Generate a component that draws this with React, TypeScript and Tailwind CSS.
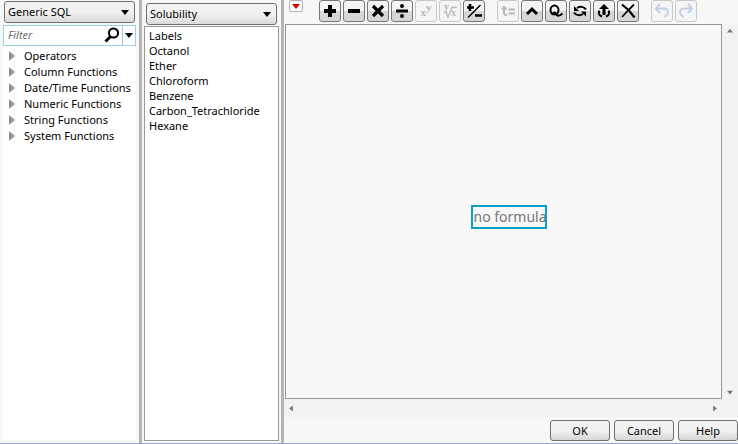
import { useState, type ReactNode } from "react";

const categories = [
  "Operators",
  "Column Functions",
  "Date/Time Functions",
  "Numeric Functions",
  "String Functions",
  "System Functions",
];

const columns = [
  "Labels",
  "Octanol",
  "Ether",
  "Chloroform",
  "Benzene",
  "Carbon_Tetrachloride",
  "Hexane",
];

interface Tool {
  label: string;
  icon: ReactNode;
  disabled?: boolean;
}

const Icon = ({ children }: { children: ReactNode }) => (
  <svg viewBox="0 0 20 20" className="size-5 shrink-0" fill="none" stroke="currentColor">
    {children}
  </svg>
);

const mathTools: Tool[] = [
  {
    label: "Add",
    icon: (
      <Icon>
        <path d="M10 4v12M4 10h12" strokeWidth="4" />
      </Icon>
    ),
  },
  {
    label: "Subtract",
    icon: (
      <Icon>
        <path d="M4 10h12" strokeWidth="4" />
      </Icon>
    ),
  },
  {
    label: "Multiply",
    icon: (
      <Icon>
        <path d="M5 5l10 10M15 5L5 15" strokeWidth="3.2" />
      </Icon>
    ),
  },
  {
    label: "Divide",
    icon: (
      <Icon>
        <path d="M4 10h12" strokeWidth="3" />
        <g fill="currentColor" stroke="none">
          <circle cx="10" cy="5" r="2" />
          <circle cx="10" cy="15" r="2" />
        </g>
      </Icon>
    ),
  },
  {
    label: "Power",
    disabled: true,
    icon: (
      <span className="flex font-['Liberation_Serif',serif] text-[11px] leading-5 font-bold">
        <span className="pt-px">x</span>
        <span className="-mt-1">y</span>
      </span>
    ),
  },
  {
    label: "Root",
    disabled: true,
    icon: (
      <span className="relative size-5 font-['Liberation_Serif',serif] text-[10px] leading-3 font-bold">
        <Icon>
          <path d="M4 12l2-1 2 5L12 6.500h5" strokeWidth="1.3" />
        </Icon>
        <span className="absolute top-0 left-1">y</span>
        <span className="absolute top-1.5 left-[11px]">x</span>
      </span>
    ),
  },
  {
    label: "Change sign",
    icon: (
      <Icon>
        <path d="M6 3v7M3 6.5h7M11 14.5h7" strokeWidth="2.6" />
        <path d="M4 16.5L16.500 4" strokeWidth="1.5" />
      </Icon>
    ),
  },
];

const editTools: Tool[] = [
  {
    label: "Local variable",
    disabled: true,
    icon: (
      <Icon>
        <path
          d="M6 5v7q0 2.500 3 2M3.500 7.500H9M10.500 8.500h6.500M10.500 12.500h6.500"
          strokeWidth="2"
        />
      </Icon>
    ),
  },
  {
    label: "Insert",
    icon: (
      <Icon>
        <path d="M5 13l5-5 5 5" strokeWidth="3" />
      </Icon>
    ),
  },
  {
    label: "Peel expression",
    icon: (
      <Icon>
        <ellipse cx="8.5" cy="9" rx="4" ry="4.5" strokeWidth="2" />
        <path d="M6 14c1-3 3-3 4-1s3 2.500 6.500-.5" strokeWidth="2" />
      </Icon>
    ),
  },
  {
    label: "Switch terms",
    icon: (
      <Icon>
        <path d="M7 7c3-2 7-1.500 9 1.500M13 13c-3 2-7 1.500-9-1.500" strokeWidth="2" />
        <path d="M4 5v5h5zM16 15.500v-5h-5z" fill="currentColor" stroke="none" />
      </Icon>
    ),
  },
  {
    label: "Wrap expression",
    icon: (
      <Icon>
        <path d="M10 14V7" strokeWidth="3" />
        <path d="M5 8l5-5 5 5z" fill="currentColor" stroke="none" />
        <path
          d="M5.500 9.500c-1.500 2.500-.5 5 2.500 6M14.500 9.500c1.500 2.500.5 5-2.500 6"
          strokeWidth="2"
        />
      </Icon>
    ),
  },
  {
    label: "Delete",
    icon: (
      <Icon>
        <path d="M4 3.500l7 6 5.500 7" strokeWidth="2.200" />
        <path d="M16 3.500l-6 6-6 6.500" strokeWidth="1.800" />
      </Icon>
    ),
  },
];

const historyTools: Tool[] = [
  {
    label: "Undo",
    disabled: true,
    icon: (
      <Icon>
        <path
          d="M8 3L4 7.500 8 12M4.500 7.500h7c5.500 0 6 7 .5 8"
          strokeWidth="2"
          className="text-[#c3d2e3]"
        />
      </Icon>
    ),
  },
  {
    label: "Redo",
    disabled: true,
    icon: (
      <Icon>
        <path
          d="M12 3l4 4.500-4 4.500M15.500 7.500h-7c-5.500 0-6 7-.5 8"
          strokeWidth="2"
          className="text-[#c3d2e3]"
        />
      </Icon>
    ),
  },
];

const ToolGroup = ({ tools }: { tools: Tool[] }) => (
  <div className="flex gap-0.5">
    {tools.map((tool) => (
      <button
        key={tool.label}
        type="button"
        aria-label={tool.label}
        disabled={tool.disabled}
        className="flex size-[22px] shrink-0 items-center justify-center overflow-hidden rounded-[3px] border border-[#777] bg-linear-to-b from-[#f3f3f3] from-50% to-[#d6d6d6] to-50% text-black disabled:border-[#c8c8c8] disabled:bg-[#f5f5f5] disabled:bg-none disabled:text-[#b8b8b8]"
      >
        {tool.icon}
      </button>
    ))}
  </div>
);

const DownArrow = ({ className = "w-2" }: { className?: string }) => (
  <svg viewBox="0 0 8 5" className={`h-[5px] ${className}`} fill="currentColor">
    <path d="M0 0h8L4 5z" />
  </svg>
);

const Picker = ({ label, options }: { label: string; options: string[] }) => (
  <div className="relative">
    <select
      aria-label={label}
      className="block h-[22px] w-full appearance-none rounded-[3px] border border-[#707070] bg-linear-to-b from-[#f2f2f2] from-50% to-[#dadada] pl-[3px] text-[11px] leading-5"
    >
      {options.map((option) => (
        <option key={option}>{option}</option>
      ))}
    </select>
    <DownArrow className="pointer-events-none absolute top-[9px] right-1.5 w-2" />
  </div>
);

const Splitter = () => <div className="w-[3px] shrink-0 bg-[#b4b4b4]" />;

const App = () => {
  const [filter, setFilter] = useState("");

  return (
    <div className="flex h-screen overflow-hidden border-b border-[#9aa5cc] bg-[#f7f7f7] font-['Noto_Sans','Open_Sans',sans-serif] text-[11px] text-black">
      <aside className="flex w-[139px] shrink-0 flex-col px-[3px] pb-[3px]">
        <div className="px-px pt-px pb-0.5">
          <Picker label="Function set" options={["Generic SQL"]} />
        </div>
        <div className="flex h-[21px] shrink-0 border border-[#9bd0e8] bg-white">
          <input
            type="text"
            aria-label="Filter functions"
            placeholder="Filter"
            value={filter}
            onChange={(e) => setFilter(e.target.value)}
            className="w-0 flex-1 pl-1 italic outline-none placeholder:text-[#707070]"
          />
          <svg viewBox="0 0 16 16" className="mt-px mr-0.5 size-4" fill="none" stroke="black">
            <circle cx="9.5" cy="6" r="4.6" strokeWidth="2" />
            <path d="M6.5 9.5L1.5 14.5" strokeWidth="3" />
          </svg>
          <button
            type="button"
            aria-label="Filter options"
            className="flex w-[13px] items-center justify-center border-l border-[#9bd0e8]"
          >
            <DownArrow />
          </button>
        </div>
        <ul className="flex-1 bg-white pt-0.5">
          {categories
            .filter((name) => name.toLowerCase().includes(filter.toLowerCase()))
            .map((name) => (
              <li key={name}>
                <button
                  type="button"
                  className="flex h-4 w-full items-center gap-[9px] pl-1.5 leading-4 whitespace-nowrap"
                >
                  <svg viewBox="0 0 6 10" className="h-2.5 w-1.5 shrink-0" fill="#969696">
                    <path d="M0 0l6 5-6 5z" />
                  </svg>
                  {name}
                </button>
              </li>
            ))}
        </ul>
      </aside>

      <Splitter />

      <section className="flex w-[139px] shrink-0 flex-col px-0.5 pt-[3px] pb-0.5">
        <div className="px-0.5 pb-px">
          <Picker label="Data table" options={["Solubility"]} />
        </div>
        <ul className="flex-1 border border-[#999] bg-white px-1 pt-px">
          {columns.map((name) => (
            <li key={name} className="h-[15px] leading-[15px] whitespace-nowrap">
              {name}
            </li>
          ))}
        </ul>
      </section>

      <Splitter />

      <main className="flex min-w-0 flex-1 flex-col">
        <div className="flex h-6 shrink-0 gap-3 pl-[5px]">
          <div className="w-[18px]">
            <button
              type="button"
              aria-label="Formula menu"
              className="flex h-3 w-3.5 items-center justify-center rounded-[2px] border border-[#b0b0b0] bg-white text-[#d00000]"
            >
              <DownArrow />
            </button>
          </div>
          <ToolGroup tools={mathTools} />
          <ToolGroup tools={editTools} />
          <ToolGroup tools={historyTools} />
        </div>

        <div className="flex min-h-0 flex-1 pl-px">
          <div className="flex flex-1 items-center justify-center border border-[#969696] bg-[#f8f8f8] pt-2.5 pl-2.5">
            <div className="h-6 w-[76px] overflow-hidden border-2 border-[#0a9fcc] pl-px text-[14px] leading-5 whitespace-nowrap text-[#777]">
              no formula
            </div>
          </div>
          <div className="flex w-4 flex-col items-center justify-between bg-[#f2f2f2] py-1 text-[#777]">
            <DownArrow className="w-1.5 rotate-180" />
            <DownArrow className="w-1.5" />
          </div>
        </div>
        <div className="flex h-[18px] shrink-0 items-center justify-between bg-[#f2f2f2] pr-5 pl-1 text-[#777]">
          <DownArrow className="w-1.5 rotate-90" />
          <DownArrow className="w-1.5 -rotate-90" />
        </div>

        <div className="flex shrink-0 justify-end gap-1 pt-[3px] pb-0.5">
          {["OK", "Cancel", "Help"].map((label) => (
            <button
              key={label}
              type="button"
              className="h-[21px] w-[60px] rounded-[3px] border border-[#707070] bg-linear-to-b from-[#f2f2f2] from-50% to-[#d6d6d6] leading-4"
            >
              {label}
            </button>
          ))}
        </div>
      </main>
    </div>
  );
};

export default App;
